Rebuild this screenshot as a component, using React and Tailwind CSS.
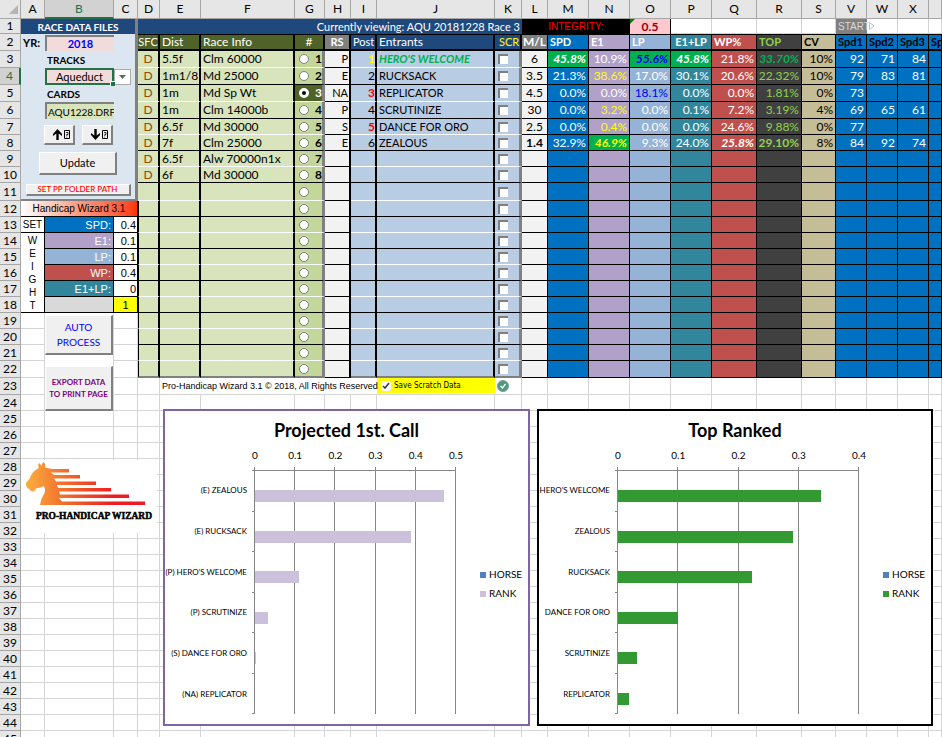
import React, { useState } from 'react'
import clsx from 'clsx'

const COLS = [
  { key: 'A', w: 'w-[24px]' },
  { key: 'B', w: 'w-[69px]' },
  { key: 'C', w: 'w-[24px]' },
  { key: 'D', w: 'w-[22px]' },
  { key: 'E', w: 'w-[41px]' },
  { key: 'F', w: 'w-[94px]' },
  { key: 'G', w: 'w-[30px]' },
  { key: 'H', w: 'w-[26px]' },
  { key: 'I', w: 'w-[26px]' },
  { key: 'J', w: 'w-[118px]' },
  { key: 'K', w: 'w-[27px]' },
  { key: 'L', w: 'w-[26px]' },
  { key: 'M', w: 'w-[41px]' },
  { key: 'N', w: 'w-[41px]' },
  { key: 'O', w: 'w-[41px]' },
  { key: 'P', w: 'w-[41px]' },
  { key: 'Q', w: 'w-[45px]' },
  { key: 'R', w: 'w-[45px]' },
  { key: 'S', w: 'w-[34px]' },
  { key: 'V', w: 'w-[31px]' },
  { key: 'W', w: 'w-[31px]' },
  { key: 'X', w: 'w-[31px]' },
  { key: '', w: '' },
]

const RACES = [
  ['D', '5.5f', 'Clm 60000'],
  ['D', '1m1/8', 'Md 25000'],
  ['D', '1m', 'Md Sp Wt'],
  ['D', '1m', 'Clm 14000b'],
  ['D', '6.5f', 'Md 30000'],
  ['D', '7f', 'Clm 25000'],
  ['D', '6.5f', 'Alw 70000n1x'],
  ['D', '6f', 'Md 30000'],
]

const HORSES = [
  { rs: 'P', name: "HERO'S WELCOME", ml: '6', stats: ['45.8%', '10.9%', '55.6%', '45.8%', '21.8%', '33.70%', '10%'], spd: [92, 71, 84] },
  { rs: 'E', name: 'RUCKSACK', ml: '3.5', stats: ['21.3%', '38.6%', '17.0%', '30.1%', '20.6%', '22.32%', '10%'], spd: [79, 83, 81] },
  { rs: 'NA', name: 'REPLICATOR', ml: '4.5', stats: ['0.0%', '0.0%', '18.1%', '0.0%', '0.0%', '1.81%', '0%'], spd: [73] },
  { rs: 'P', name: 'SCRUTINIZE', ml: '30', stats: ['0.0%', '3.2%', '0.0%', '0.1%', '7.2%', '3.19%', '4%'], spd: [69, 65, 61] },
  { rs: 'S', name: 'DANCE FOR ORO', ml: '2.5', stats: ['0.0%', '0.4%', '0.0%', '0.0%', '24.6%', '9.88%', '0%'], spd: [77] },
  { rs: 'E', name: 'ZEALOUS', ml: '1.4', stats: ['32.9%', '46.9%', '9.3%', '24.0%', '25.8%', '29.10%', '8%'], spd: [84, 92, 74] },
]

const STAT_BG = ['bg-[#0070c0]', 'bg-[#b1a0c7]', 'bg-[#95b3d7]', 'bg-[#31869b]', 'bg-[#c0504d]', 'bg-[#404040]', 'bg-[#c4bd97]']
const STAT_FG = ['text-white', 'text-white', 'text-white', 'text-white', 'text-white', 'text-[#92d050]', 'text-black']
const POST_FG = ['font-bold text-[#ffff00]', '', 'font-bold text-[#ff0000]', '', 'font-bold text-[#ff0000]', '']

// conditional formatting, keyed by horse row and stat column
const HIGHLIGHT = {
  '0-0': 'bg-[#00b050] text-white font-bold italic',
  '0-2': 'bg-[#00b050] text-[#0000ff] font-bold italic',
  '0-3': 'bg-[#00b050] text-white font-bold italic',
  '0-5': 'bg-[#404040] text-[#00b050] font-bold italic',
  '1-1': 'bg-[#b1a0c7] text-[#ffff00]',
  '2-2': 'bg-[#95b3d7] text-[#0000ff]',
  '3-1': 'bg-[#b1a0c7] text-[#ffff00]',
  '4-1': 'bg-[#b1a0c7] text-[#ffff00]',
  '5-1': 'bg-[#00b050] text-[#ffff00] font-bold italic',
  '5-4': 'bg-[#c0504d] text-white font-bold italic',
  '5-5': 'bg-[#404040] text-[#92d050] font-bold',
}

const WEIGHTS = [
  { label: 'SPD:', value: '0.4', bg: 'bg-[#0070c0]' },
  { label: 'E1:', value: '0.1', bg: 'bg-[#b1a0c7]' },
  { label: 'LP:', value: '0.1', bg: 'bg-[#95b3d7]' },
  { label: 'WP:', value: '0.4', bg: 'bg-[#c0504d]' },
  { label: 'E1+LP:', value: '0', bg: 'bg-[#31869b]' },
]

const ROW_COUNT = 45
const BUTTON = 'bg-[#f0f0f0] border-t border-l border-t-white border-l-white border-r-2 border-b-2 border-r-[#808080] border-b-[#808080]'
const GRID = 'border-r border-b border-[#d4d4d4]'

function rowHeight(n) {
  if (n === 1) return 'h-[15px]'
  if (n === 11) return 'h-[18px]'
  if ((n >= 2 && n <= 6) || n === 22 || n === 23) return 'h-[17px]'
  return 'h-[16px]'
}

function RowHeader({ n }) {
  return (
    <th className={clsx('border-b border-[#a6a6a6] font-normal text-center', n === 4 ? 'bg-[#d2d2d2] text-[#217346] border-r-2 border-r-[#217346]' : 'bg-[#e6e6e6] border-r')}>{n}</th>
  )
}

function EmptyCells({ from, to }) {
  return COLS.slice(from, to).map((c, i) => <td key={from + i} className={GRID} />)
}

function SidePanel({ n, year, setYear }) {
  if (n === 1) {
    return <td colSpan={3} className="bg-[#1f497d] text-white font-bold text-[10px] text-center border-r-3 border-[#808080]">RACE DATA FILES</td>
  }
  if (n >= 2 && n <= 6) {
    return (
      <>
        <td className="bg-[#dce6f1] font-bold text-[11px] pl-0.5">{n === 2 && <label htmlFor="year">YR:</label>}</td>
        <td className="bg-[#dce6f1]">
          {n === 2 && <input id="year" value={year} onChange={e => setYear(e.target.value)} className="block w-full h-[16px] bg-[#f2dcdb] border-t-2 border-l-2 border-[#808080] text-center text-[11px] font-bold text-[#0000ff] outline-none" />}
          {n === 3 && <label htmlFor="track" className="block font-bold text-[10px] pl-0.5">TRACKS</label>}
          {n === 4 && (
            <div className="relative h-[17px] border-2 border-[#217346] bg-[#f2dcdb]">
              <select id="track" className="block w-full h-[13px] leading-[13px] appearance-none text-center text-[11px] outline-none">
                <option>Aqueduct</option>
              </select>
              <span className="absolute -right-[3px] -bottom-[3px] size-[5px] bg-[#217346] border-t border-l border-white" />
            </div>
          )}
          {n === 5 && <label htmlFor="card" className="block font-bold text-[10px] pl-0.5">CARDS</label>}
          {n === 6 && <input id="card" defaultValue="AQU1228.DRF" className="block w-full h-[17px] bg-[#d8e4bc] border-t-2 border-l-2 border-[#808080] pl-px text-[10px] outline-none" />}
        </td>
        <td className="bg-[#dce6f1] border-r-3 border-[#808080]">
          {n === 4 && (
            <button aria-label="Choose track" className="flex items-center justify-center w-[17px] h-[16px] bg-white border border-[#ababab]">
              <svg viewBox="0 0 7 4" className="w-[7px] h-[4px]"><path d="M0 0h7L3.500 4z" fill="#666" /></svg>
            </button>
          )}
        </td>
      </>
    )
  }
  if (n === 7) {
    return (
      <td colSpan={3} rowSpan={5} className="bg-[#dce6f1] border-r-3 border-b-2 border-[#808080] align-top">
        <div className="flex flex-col items-center pt-[6px]">
          <div className="flex gap-[7px]">
            <ArrowButton label="Previous card" up />
            <ArrowButton label="Next card" />
          </div>
          <button className={clsx(BUTTON, 'w-[78px] h-[23px] mt-[7px] text-[11px]')}>Update</button>
          <button className={clsx(BUTTON, 'w-[105px] h-[12px] mt-[9px] text-[8px] leading-[9px] font-medium text-[#ff0000]')}>SET PP FOLDER PATH</button>
        </div>
      </td>
    )
  }
  if (n === 12) {
    return <td colSpan={3} className="bg-linear-to-r from-white via-[#ff9a80] to-[#ff3300] border-b border-black border-r font-['Liberation_Sans',sans-serif] text-center text-[10px]">Handicap Wizard 3.1</td>
  }
  if (n >= 13 && n <= 18) {
    const w = WEIGHTS[n - 13]
    return (
      <>
        {n === 13 && <td className="border-r border-b border-black font-['Liberation_Sans',sans-serif] text-[10px] text-center">SET</td>}
        {n === 14 && (
          <td rowSpan={5} className="border-r border-b border-black font-['Liberation_Sans',sans-serif] text-[10px] text-center">
            {'WEIGHT'.split('').map(ch => <span key={ch} className="block leading-[13px]">{ch}</span>)}
          </td>
        )}
        <td className={clsx("border-r border-b border-black font-['Liberation_Sans',sans-serif] text-[11px] text-white text-right pr-0.5", w ? w.bg : 'bg-[#d9d9d9]')}>{w && w.label}</td>
        <td className={clsx("border-r border-b border-black font-['Liberation_Sans',sans-serif] text-[11px]", w ? 'text-right pr-px' : 'bg-[#ffff00] text-center')}>{w ? w.value : 1}</td>
      </>
    )
  }
  if (n >= 19 && n <= 24) {
    return (
      <>
        <td className={GRID} />
        {n === 19 && (
          <td rowSpan={3} className="border-r border-[#d4d4d4] align-top pt-[2px]">
            <button className={clsx(BUTTON, 'block w-full h-[40px] text-[10px] leading-[15px] text-[#0000ff]')}>AUTO<br />PROCESS</button>
          </td>
        )}
        {n === 22 && (
          <td rowSpan={3} className="border-r border-[#d4d4d4] align-top pt-[5px]">
            <button className={clsx(BUTTON, 'block w-full h-[45px] text-[8px] leading-[12px] font-bold text-[#800080]')}>EXPORT DATA<br />TO PRINT PAGE</button>
          </td>
        )}
        <td className={GRID} />
      </>
    )
  }
  return n > 24 ? <EmptyCells from={0} to={3} /> : <EmptyCells from={0} to={0} />
}

function ArrowButton({ label, up }) {
  return (
    <button aria-label={label} className={clsx(BUTTON, 'flex items-center justify-end gap-0.5 pr-[3px] w-[31px] h-[20px]')}>
      <svg viewBox="0 0 9 11" className={clsx('w-[9px] h-[11px]', !up && 'rotate-180')}>
        <path d="M4.500 0L9 5v2L5.700 4.500V11H3.300V4.500L0 7V5z" fill="#000" />
      </svg>
      <svg viewBox="0 0 6 9" className="w-[6px] h-[9px]">
        <path d="M.5 .5h5v8h-5z" fill="none" stroke="#000" />
        <path d="M2 2.500h2v2H2.800V6M2.800 6.700v.8" fill="none" stroke="#000" strokeWidth=".8" />
      </svg>
    </button>
  )
}

function RaceCells({ n, race, setRace }) {
  const idx = n - 3
  const r = RACES[idx] || []
  const line = n === 22 ? 'border-b-2 border-b-[#808080]' : n % 2 ? 'border-b border-b-white' : 'border-b border-b-black'
  const active = race === idx
  return (
    <>
      <td className={clsx('bg-[#d8e4bc] border-r-2 border-r-black text-center text-[#974706]', line, n > 11 && 'border-l border-l-black')}>{r[0]}</td>
      <td className={clsx('bg-[#d8e4bc] border-r-2 border-r-black pl-0.5', line)}>{r[1]}</td>
      <td className={clsx('bg-[#d8e4bc] border-r-2 border-r-black pl-0.5', line)}>{r[2]}</td>
      <td className={clsx('border-r-3 border-r-[#808080]', line, active ? 'bg-[#4f6228] text-white' : 'bg-[#c4d79b]')}>
        <div className="flex items-center justify-between pl-1 font-bold">
          <input type="radio" name="race" aria-label={`Race ${idx + 1}`} checked={active} onChange={() => setRace(idx)}
            className="appearance-none size-[10px] rounded-full bg-white border border-[#808080] checked:bg-black checked:border-3 checked:border-white" />
          {r[0] && <span>{idx + 1}</span>}
        </div>
      </td>
    </>
  )
}

function EntrantCells({ n }) {
  const idx = n - 3
  const h = HORSES[idx]
  const line = n === 22 ? 'border-b-2 border-b-[#808080]' : n % 2 ? 'border-b border-b-white' : 'border-b border-b-black'
  return (
    <>
      <td className="bg-[#f2f2f2] border-r-2 border-b border-black text-right pr-px text-[11px]">{h?.rs}</td>
      <td className={clsx('bg-[#b8cce4] border-r-2 border-r-black text-right', line, POST_FG[idx])}>{h && idx + 1}</td>
      <td className={clsx('bg-[#b8cce4] border-r-2 border-r-black pl-0.5 text-[11px]', line, idx === 0 && 'font-bold italic text-[#00b050]')}>{h?.name}</td>
      <td className={clsx('bg-[#b8cce4] border-r-3 border-r-[#808080]', line)}>
        <input type="checkbox" aria-label={`Scratch entry ${idx + 1}`}
          className="block ml-[3px] appearance-none size-[10px] bg-white border-t-2 border-l-2 border-[#808080] checked:bg-black" />
      </td>
      <td className={clsx('bg-[#f2f2f2] border-r border-b border-black text-center', idx === 5 && 'font-bold')}>{h?.ml}</td>
      {STAT_BG.map((bg, i) => (
        <td key={i} className={clsx('border-r border-b border-black text-right pr-0.5', HIGHLIGHT[`${idx}-${i}`] || [bg, STAT_FG[i]])}>{h?.stats[i]}</td>
      ))}
      {[0, 1, 2, 3].map(i => (
        <td key={i} className="bg-[#0070c0] border-r border-b border-black text-white text-right pr-0.5">{h?.spd[i]}</td>
      ))}
    </>
  )
}

function BannerCells() {
  return (
    <>
      <td colSpan={8} className="bg-[#1f497d] text-white text-right text-[11px] pr-0.5">Currently viewing: AQU 20181228 Race 3</td>
      <td colSpan={3} className="bg-black text-[#ff0000] text-center font-['Liberation_Sans',sans-serif] text-[10px]">INTEGRITY:</td>
      <td className="relative bg-[#ffc7ce] border-r border-black text-[#9c0006] font-bold text-center">
        <svg viewBox="0 0 5 5" className="absolute left-0 top-0 size-[5px]"><path d="M0 0h5L0 5z" fill="#008000" /></svg>
        0.5
      </td>
      <EmptyCells from={15} to={19} />
      <td className="bg-[#808080] text-[#d9d9d9] font-['Liberation_Sans',sans-serif] text-[10px] pl-0.5">START</td>
      <td className={GRID}>
        <svg viewBox="0 0 6 8" className="block w-[6px] h-[8px] ml-[2px]"><path d="M.5 .5L5 4 .5 7.500z" fill="none" stroke="#bfbfbf" /></svg>
      </td>
      <EmptyCells from={21} to={23} />
    </>
  )
}

function HeadingCells() {
  const base = 'border-b-2 border-t border-black'
  const green = 'bg-[#4f6228] text-white font-normal border-r-2'
  const blue = 'bg-[#1f497d] font-normal text-left'
  const stat = 'border-r text-left pl-0.5 text-[11px]'
  return (
    <>
      <th className={clsx(base, green, 'text-[11px] text-center')}>SFC</th>
      <th className={clsx(base, green, 'text-left pl-0.5')}>Dist</th>
      <th className={clsx(base, green, 'text-left pl-0.5')}>Race Info</th>
      <th className={clsx(base, green, 'text-center')}>#</th>
      <th className={clsx(base, 'bg-[#808080] text-white text-center border-r-2 text-[11px]')}>RS</th>
      <th className={clsx(base, blue, 'text-white border-r-2 pl-0.5 text-[11px]')}>Post</th>
      <th className={clsx(base, blue, 'text-white border-r-2 pl-0.5')}>Entrants</th>
      <th className={clsx(base, blue, 'text-[#ffff00] border-r-2 pl-1 text-[11px]')}>SCR</th>
      <th className={clsx(base, 'bg-[#808080] text-white border-r text-center')}>M/L</th>
      <th className={clsx(base, stat, 'bg-[#0070c0] text-white')}>SPD</th>
      <th className={clsx(base, stat, 'bg-[#b1a0c7] text-white')}>E1</th>
      <th className={clsx(base, stat, 'bg-[#95b3d7] text-white')}>LP</th>
      <th className={clsx(base, 'border-r bg-[#31869b] text-white text-center text-[11px]')}>E1+LP</th>
      <th className={clsx(base, stat, 'bg-[#c0504d] text-white')}>WP%</th>
      <th className={clsx(base, stat, 'bg-[#404040] text-[#92d050]')}>TOP</th>
      <th className={clsx(base, stat, 'bg-[#c4bd97]')}>CV</th>
      <th className={clsx(base, stat, 'bg-[#0070c0]')}>Spd1</th>
      <th className={clsx(base, stat, 'bg-[#0070c0]')}>Spd2</th>
      <th className={clsx(base, stat, 'bg-[#0070c0]')}>Spd3</th>
      <th className={clsx(base, stat, 'bg-[#0070c0]')}>Sp</th>
    </>
  )
}

function FooterCells() {
  return (
    <>
      <td className={GRID} />
      <td colSpan={5} className="border-b border-[#d4d4d4] font-['Liberation_Sans',sans-serif] text-[9px] pl-0.5">Pro-Handicap Wizard 3.1 © 2018, All Rights Reserved</td>
      <td className="border-b border-[#d4d4d4] align-top">
        <label className="flex items-center gap-[3px] h-[15px] bg-[#ffff00] pl-1 font-['DejaVu_Sans_Condensed',sans-serif] text-[8px]">
          <input type="checkbox" defaultChecked className="size-[10px] accent-white" />
          Save Scratch Data
        </label>
      </td>
      <td className={GRID}>
        <svg viewBox="0 0 12 12" className="block size-[12px] ml-[2px]">
          <circle cx="6" cy="6" r="5.500" fill="#4e9a80" stroke="#7f9f94" />
          <path d="M3.500 6l2 2 3-4" fill="none" stroke="#fff" strokeWidth="1.300" />
        </svg>
      </td>
      <EmptyCells from={11} to={23} />
    </>
  )
}

function Logo() {
  return (
    <div className="absolute left-[21px] top-[460px] w-[136px] h-[73px] bg-white">
      <svg viewBox="0 0 136 73" className="block w-full h-full" role="img" aria-label="Pro-Handicap Wizard">
        <defs>
          <linearGradient id="flame" x1="4" x2="92" y1="0" y2="0" gradientUnits="userSpaceOnUse">
            <stop offset="0" stopColor="#fbb040" />
            <stop offset=".5" stopColor="#f1672a" />
            <stop offset="1" stopColor="#ed1c24" />
          </linearGradient>
        </defs>
        <path fill="url(#flame)" d="M18 8Q16 5 18.500 3L20.500 6Q20.500 3.500 22.500 2Q25 4 24 7.500L31 9H48V12.500H30L33 15H59V18.500H33L35 21.500H75V25H36L37 28H90V31.500H38L39 34.500H108V38H38L41 41.500H124V45H19Q20 38 23.500 33Q25 29 22.500 26Q19 28.500 16 28Q14 29 13 31.500Q10 32 8.500 29.500Q4.500 27.500 5 23Q9 19 10.500 14.500Q13 10 18 8Z" />
        <text x="73" y="59" textAnchor="middle" fontSize="9.500" fontWeight="900" fontFamily="'Liberation Serif', serif" stroke="#000" strokeWidth=".5">PRO-HANDICAP WIZARD</text>
      </svg>
    </div>
  )
}

function BarChart({ title, data, max, className, plotClass, labelClass, barClass }) {
  const ticks = Array.from({ length: max * 10 + 1 }, (_, i) => i / 10)
  return (
    <section className={clsx('absolute top-[409px] h-[317px] border-2 bg-white', className)}>
      <h2 className="pt-[8px] text-center text-[18px] leading-[22px] font-bold">{title}</h2>
      <div className="flex pt-[29px]">
        <ul className={clsx('flex flex-col shrink-0 h-[244px] mr-[7px] text-right text-[8px] whitespace-nowrap', labelClass)}>
          {data.map(d => <li key={d.name} className="flex flex-1 items-center justify-end">{d.name}</li>)}
        </ul>
        <div className={clsx('relative h-[244px] border-t border-l border-[#868686]', plotClass)}>
          {ticks.map(t => (
            <div key={t} className="absolute -top-[4px] bottom-0 -ml-px border-l border-[#868686]" style={{ left: `${(t / max) * 100}%` }}>
              <span className="absolute left-0 -top-[20px] -translate-x-1/2 text-[10px] leading-[16px]">{t}</span>
            </div>
          ))}
          <div className="relative flex flex-col h-full">
            {data.map(d => (
              <div key={d.name} className="flex-1 pt-[19px]">
                <div className={clsx('h-[12px]', barClass)} style={{ width: `${(d.value / max) * 100}%` }} />
              </div>
            ))}
          </div>
          <div className="absolute -left-[3px] -top-px bottom-0 w-[2px] flex flex-col border-t border-b border-[#868686]">
            {data.map(d => <span key={d.name} className="flex-1 border-b border-[#868686] last:border-b-0" />)}
          </div>
        </div>
        <ul className="ml-auto pt-[95px] w-[48px] text-[10px] leading-[19px]">
          <li className="flex items-center gap-[3px]"><span className="size-[6px] bg-[#4f81bd]" />HORSE</li>
          <li className="flex items-center gap-[3px]"><span className={clsx('size-[6px]', barClass)} />RANK</li>
        </ul>
      </div>
    </section>
  )
}

const FIRST_CALL = [
  { name: '(E) ZEALOUS', value: 0.469 },
  { name: '(E) RUCKSACK', value: 0.387 },
  { name: "(P) HERO'S WELCOME", value: 0.109 },
  { name: '(P) SCRUTINIZE', value: 0.032 },
  { name: '(S) DANCE FOR ORO', value: 0.003 },
  { name: '(NA) REPLICATOR', value: 0 },
]

const TOP_RANKED = [
  { name: "HERO'S WELCOME", value: 0.337 },
  { name: 'ZEALOUS', value: 0.291 },
  { name: 'RUCKSACK', value: 0.223 },
  { name: 'DANCE FOR ORO', value: 0.099 },
  { name: 'SCRUTINIZE', value: 0.032 },
  { name: 'REPLICATOR', value: 0.018 },
]

export default function App() {
  const [race, setRace] = useState(2)
  const [year, setYear] = useState('2018')

  return (
    <div className="relative h-screen overflow-hidden bg-white font-[Lato,sans-serif] text-[12px] leading-[14px] text-black">
      <table className="w-full table-fixed border-separate border-spacing-0 [&_td]:whitespace-nowrap [&_th]:whitespace-nowrap [&_th]:overflow-hidden">
        <colgroup>
          <col className="w-[21px]" />
          {COLS.map((c, i) => <col key={i} className={c.w} />)}
        </colgroup>
        <thead>
          <tr className="h-[19px] bg-[#e6e6e6]">
            <th className="border-r border-b border-[#a6a6a6]">
              <svg viewBox="0 0 9 9" className="w-[9px] h-[9px] ml-auto mr-[2px]"><path d="M9 0v9H0z" fill="#b4b4b4" /></svg>
            </th>
            {COLS.map((c, i) => (
              <th key={i} className={clsx('border-r border-b border-[#a6a6a6] font-normal', c.key === 'B' && 'bg-[#d2d2d2] text-[#217346] border-b-2 border-b-[#217346]')}>{c.key}</th>
            ))}
          </tr>
        </thead>
        <tbody>
          {Array.from({ length: ROW_COUNT }, (_, i) => i + 1).map(n => (
            <tr key={n} className={rowHeight(n)}>
              <RowHeader n={n} />
              <SidePanel n={n} year={year} setYear={setYear} />
              {n === 1 && <BannerCells />}
              {n === 2 && <HeadingCells />}
              {n >= 3 && n <= 22 && (
                <>
                  <RaceCells n={n} race={race} setRace={setRace} />
                  <EntrantCells n={n} />
                </>
              )}
              {n === 23 && <FooterCells />}
              {n > 23 && <EmptyCells from={3} to={23} />}
            </tr>
          ))}
        </tbody>
      </table>

      <Logo />
      <BarChart title="Projected 1st. Call" data={FIRST_CALL} max={0.5} className="left-[163px] w-[367px] border-[#8064a2]"
        labelClass="w-[82px]" plotClass="w-[202px]" barClass="bg-[#ccc1da]" />
      <BarChart title="Top Ranked" data={TOP_RANKED} max={0.4} className="left-[537px] w-[396px] border-black"
        labelClass="w-[71px]" plotClass="w-[242px]" barClass="bg-[#339933]" />
    </div>
  )
}
